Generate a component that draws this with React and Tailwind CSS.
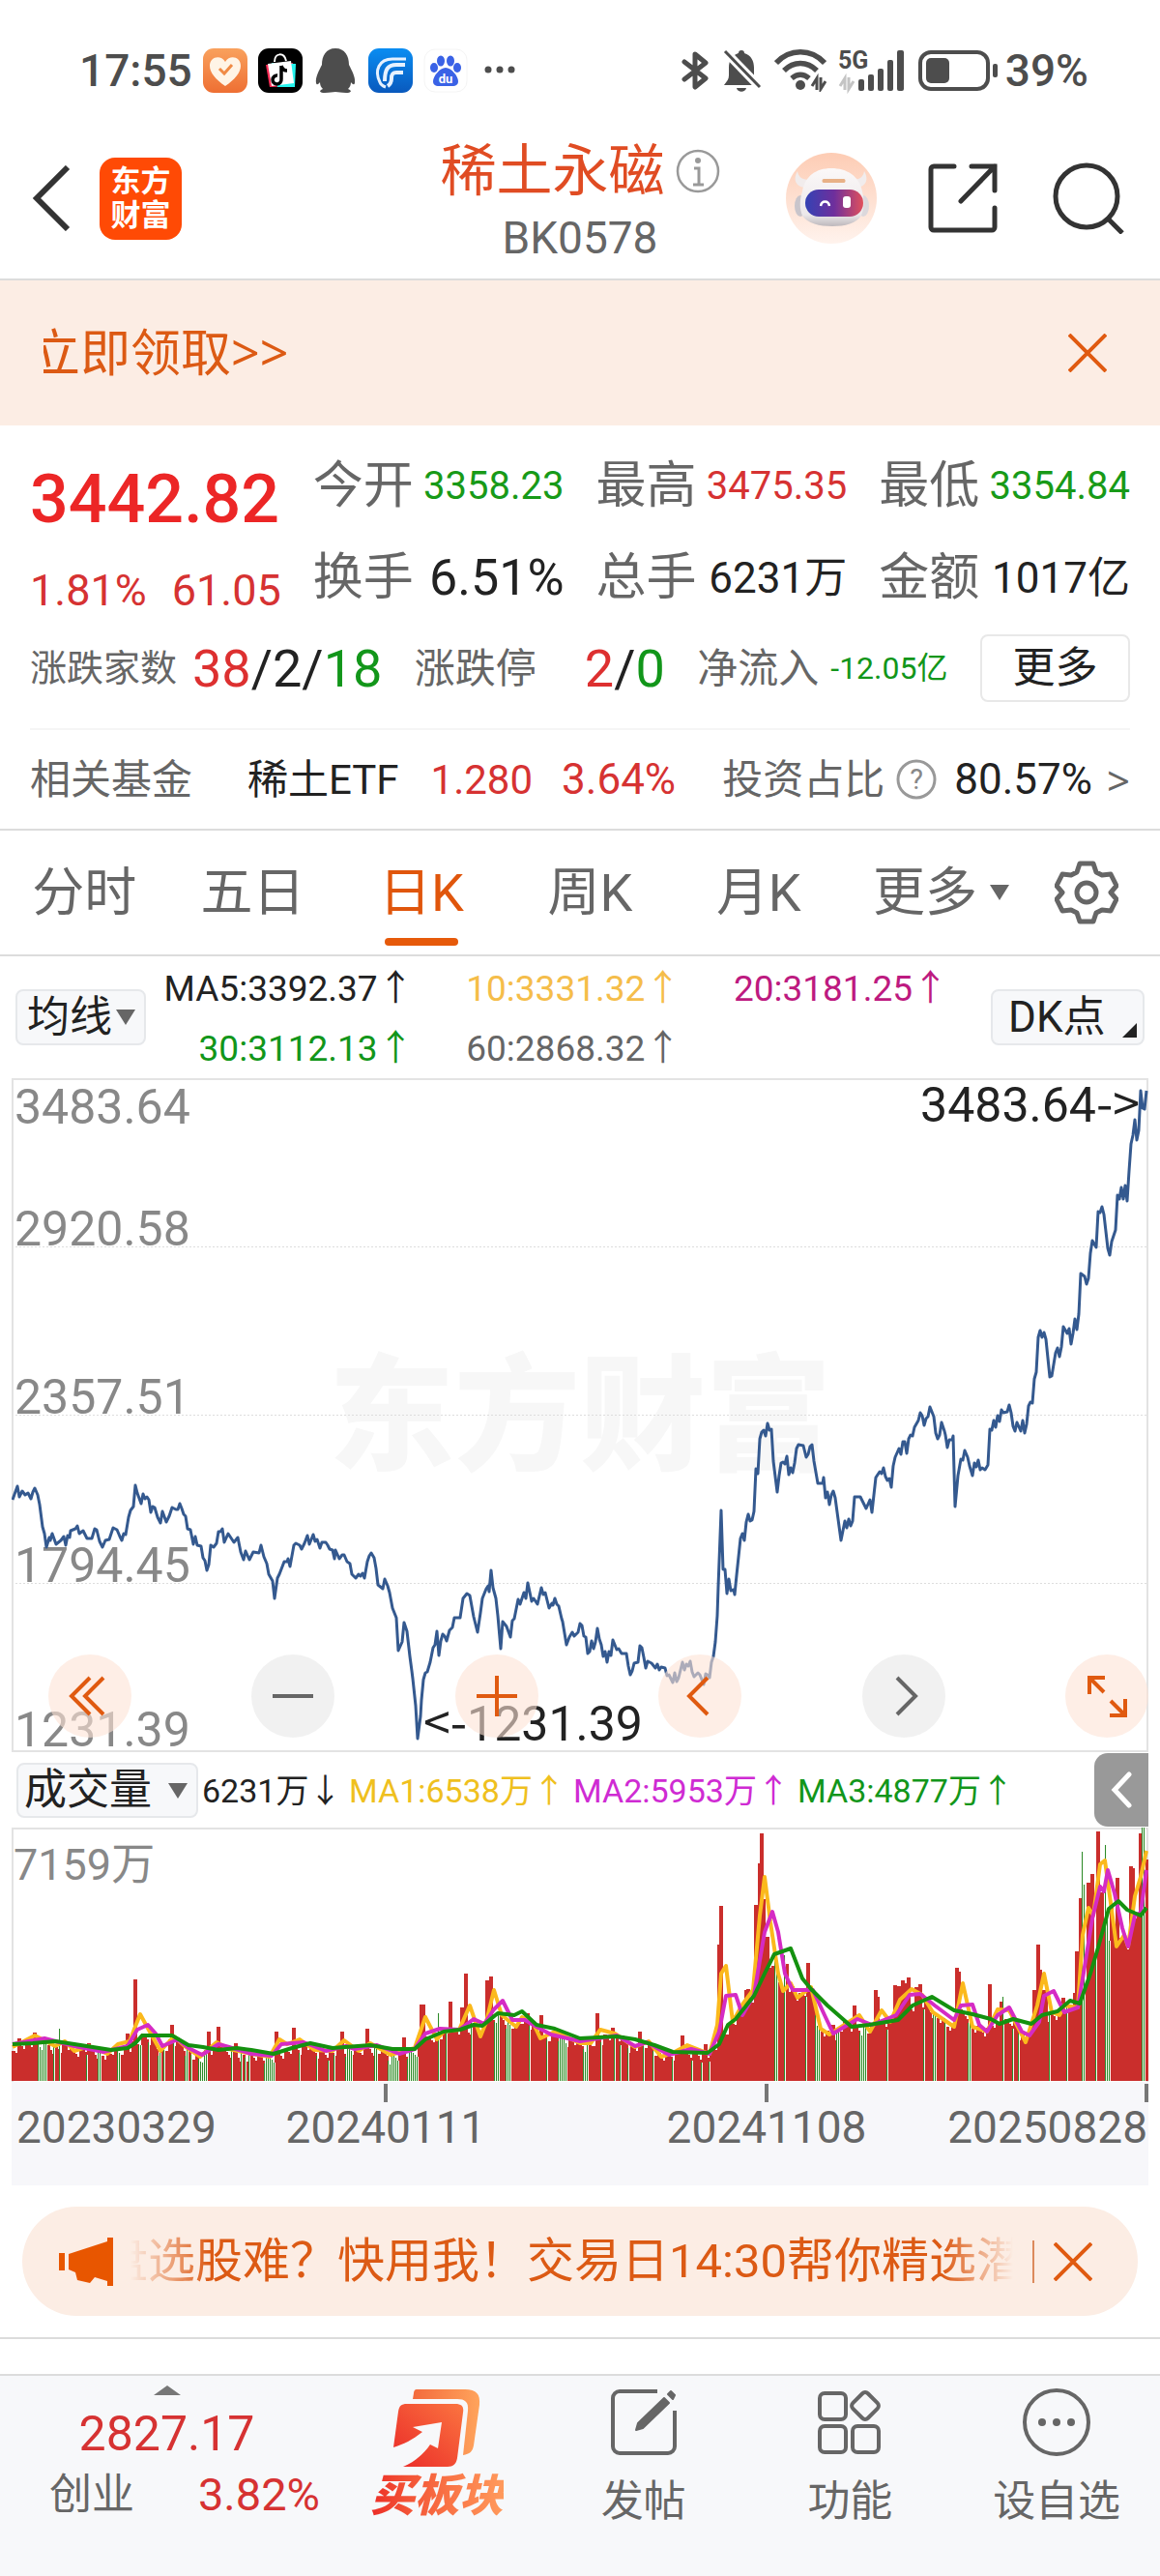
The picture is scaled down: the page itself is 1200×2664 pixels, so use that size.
const QUOTES = [
  [
    { label: '今开', value: '3358.23', cls: 'text-[40px] text-[#189a18]' },
    { label: '换手', value: '6.51%', cls: 'text-[52px] text-[#222]' }
  ],
  [
    { label: '最高', value: '3475.35', cls: 'text-[40px] text-[#d63232]' },
    { label: '总手', value: '6231万', cls: 'text-[44px] text-[#222]' }
  ],
  [
    { label: '最低', value: '3354.84', cls: 'text-[40px] text-[#189a18]' },
    { label: '金额', value: '1017亿', cls: 'text-[44px] text-[#222]' }
  ]
]

const TABS = ['分时', '五日', '日K', '周K', '月K']

const AVERAGES = [
  { text: 'MA5:3392.37', cls: 'text-[#222]' },
  { text: '10:3331.32', cls: 'text-[#f5bd4a]' },
  { text: '20:3181.25', cls: 'text-[#bd1a80]' },
  { text: '30:3112.13', cls: 'text-[#12961a]' },
  { text: '60:2868.32', cls: 'text-[#666]' }
]

const VOLUME_AVERAGES = [
  { text: 'MA1:6538万', cls: 'text-[#efc01e]' },
  { text: 'MA2:5953万', cls: 'text-[#cf2bd3]' },
  { text: 'MA3:4877万', cls: 'text-[#12961a]' }
]

const PRICE_TICKS = [
  { y: 1161, text: '3483.64' },
  { y: 1287, text: '2920.58' },
  { y: 1461, text: '2357.51' },
  { y: 1635, text: '1794.45' },
  { y: 1805, text: '1231.39' }
]

const PRICE_LINE = `13,1550 18,1536 20,1547 23,1541 26,1545 29,1543 32,1549 34,1542 36,1538 39,1545 41,1555 44,1578 46,1585 48,1599 51,1589 52,1592 54,1585 58,1596 63,1592 66,1588 68,1597 70,1587 72,1589 73,1582 78,1580 80,1577 82,1585 86,1582 90,1590 95,1590 98,1580 100,1581 103,1593 106,1599 109,1592 113,1591 117,1579 121,1581 124,1588 126,1592 128,1585 130,1586 133,1568 135,1561 138,1557 140,1535 142,1543 146,1554 148,1544 150,1549 152,1547 154,1550 156,1563 158,1557 160,1558 163,1568 166,1574 168,1562 172,1573 175,1567 178,1558 182,1560 184,1560 186,1554 188,1559 190,1565 192,1567 194,1580 197,1581 200,1596 202,1588 204,1597 208,1598 210,1610 212,1613 214,1623 216,1617 218,1597 221,1599 224,1595 226,1583 228,1583 230,1580 232,1594 236,1585 238,1588 242,1594 246,1589 249,1604 252,1612 254,1603 258,1612 262,1604 268,1605 270,1597 273,1609 276,1616 278,1627 282,1634 284,1652 287,1631 289,1627 294,1614 297,1614 298,1611 300,1619 304,1597 306,1595 310,1597 312,1601 315,1595 318,1587 320,1596 324,1586 326,1593 328,1591 331,1600 333,1594 337,1594 339,1597 341,1601 344,1602 346,1611 347,1602 351,1611 354,1607 356,1607 359,1614 362,1616 364,1627 368,1631 371,1627 373,1629 375,1626 377,1631 380,1614 382,1608 384,1605 387,1610 389,1621 391,1638 396,1642 398,1632 401,1639 403,1646 406,1662 410,1672 412,1706 416,1697 418,1677 421,1686 424,1712 426,1727 427,1735 430,1763 432,1797 435,1774 436,1757 438,1736 440,1729 442,1728 445,1718 448,1703 450,1700 452,1686 454,1711 456,1696 458,1689 460,1691 462,1696 465,1685 468,1682 470,1672 476,1672 479,1652 483,1647 486,1649 490,1671 494,1687 497,1667 499,1652 503,1642 505,1639 506,1645 508,1623 510,1641 513,1652 515,1670 518,1704 520,1676 524,1681 528,1692 530,1675 532,1673 536,1653 538,1658 542,1646 544,1652 546,1636 550,1655 552,1652 556,1658 560,1641 562,1648 564,1646 568,1662 571,1657 572,1659 574,1652 576,1658 578,1660 581,1673 582,1676 586,1700 589,1692 592,1687 594,1691 598,1687 600,1678 602,1680 604,1691 606,1692 608,1709 610,1707 612,1696 614,1704 616,1697 618,1683 620,1694 622,1700 624,1712 626,1707 628,1718 630,1707 632,1711 634,1695 638,1705 640,1704 643,1709 648,1709 650,1722 652,1731 654,1727 656,1719 660,1718 662,1701 664,1703 666,1713 668,1724 670,1717 674,1719 678,1724 680,1720 682,1726 684,1723 688,1724 690,1732 692,1731 696,1739 698,1729 700,1738 702,1734 706,1718 708,1726 710,1720 712,1722 714,1717 716,1728 718,1733 722,1729 724,1731 728,1741 730,1730 732,1731 734,1734 736,1718 738,1712 740,1697 742,1670 743,1640 746,1561 748,1622 750,1622 752,1647 754,1632 756,1644 759,1643 760,1648 762,1628 766,1590 768,1585 770,1592 772,1573 774,1565 776,1572 778,1571 780,1562 782,1518 784,1523 786,1487 788,1480 790,1478 792,1484 794,1471 796,1478 798,1477 800,1510 804,1542 806,1525 808,1512 810,1511 812,1513 814,1505 816,1524 818,1517 820,1522 822,1512 824,1497 826,1493 831,1494 834,1506 836,1503 838,1495 840,1493 842,1510 846,1533 851,1533 852,1527 854,1548 856,1542 858,1555 860,1545 862,1541 864,1548 867,1570 870,1592 874,1572 876,1579 878,1570 880,1577 882,1572 884,1547 890,1547 893,1553 896,1559 900,1550 902,1563 904,1545 906,1527 910,1521 912,1523 914,1517 916,1526 918,1530 920,1528 922,1537 924,1515 926,1506 930,1497 932,1503 934,1490 936,1490 938,1502 940,1487 942,1483 944,1484 946,1475 950,1468 952,1460 954,1463 956,1473 958,1466 960,1464 962,1454 966,1464 968,1481 970,1487 972,1483 974,1470 977,1479 978,1483 980,1496 982,1488 985,1488 986,1484 988,1557 991,1525 994,1508 996,1509 998,1499 1001,1506 1003,1515 1006,1525 1008,1512 1010,1516 1012,1509 1014,1519 1016,1517 1019,1519 1022,1514 1024,1477 1026,1478 1028,1468 1030,1475 1032,1463 1034,1469 1036,1457 1038,1460 1042,1459 1044,1452 1046,1460 1048,1474 1050,1479 1052,1470 1056,1479 1058,1468 1060,1481 1062,1472 1064,1453 1066,1449 1068,1450 1070,1425 1072,1418 1074,1382 1076,1375 1078,1382 1080,1377 1082,1384 1086,1423 1088,1422 1092,1398 1094,1393 1096,1402 1098,1392 1100,1371 1104,1378 1106,1373 1108,1389 1110,1378 1112,1363 1114,1374 1116,1358 1118,1316 1122,1319 1124,1327 1126,1321 1128,1295 1130,1282 1134,1289 1136,1252 1138,1253 1140,1247 1142,1255 1146,1290 1148,1297 1150,1283 1154,1271 1156,1235 1158,1239 1160,1227 1162,1239 1164,1225 1166,1241 1168,1210 1170,1182 1172,1173 1174,1157 1176,1178 1178,1168 1180,1127 1182,1145 1184,1146 1186,1127`

const MA1 = `13,2116 36,2104 57,2115 67,2110 77,2120 92,2115 111,2123 122,2113 134,2110 145,2082 151,2093 166,2120 180,2105 191,2115 207,2126 224,2111 237,2118 260,2123 279,2126 289,2108 297,2113 310,2108 325,2119 344,2120 356,2109 371,2120 383,2112 404,2124 429,2117 440,2085 452,2108 459,2100 475,2098 486,2073 497,2105 503,2090 511,2057 519,2083 534,2095 540,2085 551,2090 559,2107 574,2100 600,2112 611,2112 621,2098 636,2102 657,2116 671,2110 684,2126 696,2122 711,2114 734,2123 742,2093 746,2040 751,2032 758,2090 768,2072 779,2057 786,1980 791,1940 797,1987 805,2040 810,2058 818,2050 825,2065 839,2054 849,2097 858,2103 889,2083 900,2100 912,2078 921,2090 931,2067 943,2056 954,2062 965,2080 987,2095 996,2050 1006,2095 1021,2100 1032,2077 1044,2078 1061,2111 1073,2073 1080,2040 1088,2080 1096,2083 1101,2073 1115,2075 1120,2000 1126,1972 1131,1980 1138,1927 1143,1923 1149,1967 1155,2012 1163,2000 1167,2012 1174,1960 1180,1940 1186,1913`
const MA2 = `13,2113 46,2107 77,2115 107,2121 132,2115 142,2098 153,2093 161,2102 168,2115 184,2108 195,2117 209,2124 226,2113 237,2116 260,2123 281,2125 291,2113 314,2111 337,2120 358,2115 367,2118 390,2114 413,2123 429,2118 440,2102 455,2097 475,2098 490,2087 501,2092 511,2077 520,2068 530,2088 543,2088 555,2095 570,2103 600,2110 638,2104 657,2115 669,2111 692,2124 715,2118 734,2123 744,2100 751,2063 761,2062 768,2083 780,2062 791,1997 799,1976 805,1997 812,2040 820,2057 841,2057 853,2083 862,2102 887,2087 902,2093 927,2083 941,2062 952,2061 967,2073 987,2088 994,2073 1006,2072 1013,2093 1021,2100 1032,2083 1044,2075 1057,2100 1065,2104 1075,2090 1080,2063 1090,2058 1101,2080 1115,2075 1122,2033 1130,1983 1138,1950 1142,1955 1146,1933 1153,1957 1161,1993 1167,2012 1174,1980 1180,1977 1186,1933`
const MA3 = `13,2113 34,2112 57,2110 77,2113 96,2116 115,2119 132,2117 140,2112 147,2104 178,2104 195,2114 210,2116 226,2119 245,2117 260,2119 283,2123 302,2117 321,2112 344,2117 383,2114 406,2118 429,2118 440,2108 459,2100 476,2098 490,2093 499,2094 515,2081 532,2083 540,2079 555,2093 574,2097 600,2107 638,2105 657,2108 677,2114 696,2121 732,2122 744,2113 753,2093 761,2087 780,2063 791,2040 801,2020 818,2014 830,2045 839,2056 856,2073 881,2095 899,2093 929,2088 944,2073 964,2064 987,2078 1006,2082 1025,2087 1034,2092 1048,2087 1067,2092 1078,2083 1094,2079 1107,2068 1117,2071 1128,2040 1136,2013 1147,1973 1157,1965 1166,1974 1180,1980 1186,1972`

// days that stand well above their neighbours: x, top
const PEAKS = [
  [20, 2107], [36, 2101], [62, 2097], [132, 2102], [140, 2046], [178, 2093], [216, 2100], [226, 2095], [244, 2112],
  [286, 2100], [304, 2096], [354, 2100], [380, 2097], [418, 2106], [436, 2072], [438, 2072], [454, 2081], [466, 2069],
  [478, 2075], [482, 2040], [504, 2047], [508, 2043], [546, 2081], [560, 2083], [618, 2081], [634, 2096], [662, 2100],
  [706, 2104], [730, 2113], [744, 2010], [746, 1970], [772, 2057], [774, 2056], [782, 1969], [786, 1926], [788, 1895],
  [790, 1963], [794, 2002], [798, 2037], [812, 2021], [814, 2030], [836, 2029], [862, 2093], [884, 2073], [906, 2057],
  [908, 2064], [926, 2052], [930, 2053], [934, 2047], [936, 2050], [940, 2044], [948, 2054], [952, 2051], [990, 2034],
  [992, 2038], [1024, 2051], [1036, 2069], [1038, 2064], [1070, 2057], [1074, 2010], [1076, 2036], [1080, 2057],
  [1082, 2057], [1100, 2065], [1112, 2060], [1114, 2017], [1118, 1962], [1120, 1914], [1122, 1948], [1126, 1946],
  [1130, 1937], [1136, 1893], [1140, 1956], [1144, 1907], [1148, 2006], [1156, 1941], [1170, 1929], [1172, 1931],
  [1180, 1895], [1182, 1889], [1184, 1889], [1186, 1922]
]

// stretches of falling days
const FALLS = [
  [40, 48], [56, 56], [62, 62], [90, 90], [102, 105], [122, 125], [144, 146], [154, 154], [163, 166], [170, 170],
  [180, 180], [191, 194], [198, 198], [206, 214], [240, 240], [250, 250], [254, 254], [258, 258], [274, 284],
  [310, 310], [328, 328], [340, 340], [346, 346], [358, 364], [388, 391], [402, 412], [422, 432], [454, 454],
  [462, 462], [488, 488], [512, 517], [524, 528], [548, 548], [566, 566], [578, 586], [603, 608], [622, 622],
  [636, 636], [642, 642], [650, 650], [666, 666], [676, 676], [696, 696], [716, 716], [726, 726], [734, 734],
  [802, 804], [812, 812], [834, 834], [844, 849], [866, 869], [890, 896], [918, 918], [956, 956], [966, 969],
  [978, 978], [1002, 1005], [1038, 1038], [1048, 1048], [1054, 1054], [1085, 1087], [1104, 1104], [1120, 1122],
  [1134, 1134], [1144, 1148], [1182, 1184]
]

const toPoints = (s) => s.split(' ').map(p => p.split(',').map(Number))

function yAt(points, x) {
  for (let i = 1; i < points.length; i++) {
    const [x0, y0] = points[i - 1]
    const [x1, y1] = points[i]
    if (x <= x1) return y0 + ((y1 - y0) * (x - x0)) / (x1 - x0)
  }
  return points[points.length - 1][1]
}

function buildBars() {
  const base1 = toPoints(MA1)
  const base3 = toPoints(MA3)
  const peaks = new Map(PEAKS)
  const bars = []
  for (let x = 14; x <= 1186; x += 2) {
    const down = FALLS.some(([a, b]) => x >= a && x <= b)
    const noise = ((x * 37) % 23) / 23
    const level = Math.max(yAt(base1, x), yAt(base3, x))
    const top = peaks.get(x) ?? Math.round(level + noise * 14 - 3)
    bars.push({ x, top, down })
  }
  return bars
}

const BARS = buildBars()
const RISE_PATH = BARS.filter(b => !b.down).map(b => `M${b.x - 2} 2151V${b.top}h4V2151z`).join('')
const FALL_BARS = BARS.filter(b => b.down)
const FALL_GAPS = FALL_BARS.map(b => `M${b.x} 2151V${b.top}`).join('')
const FALL_PATH = FALL_BARS.map(b => `M${b.x - 0.5} 2151V${b.top}`).join('')

function Arrow({ down }) {
  return <span className="[font-family:'Noto_Sans_CJK_SC',sans-serif]">{down ? '↓' : '↑'}</span>
}

function CloseIcon() {
  return (
    <svg viewBox="0 0 40 40" className="size-10" fill="none" stroke="#e05a10" strokeWidth="4">
      <path d="M1 1 39 39M39 1 1 39" />
    </svg>
  )
}

function StatusBar() {
  return (
    <div className="h-[146px] pl-[82px] pr-[74px] flex items-center justify-between text-[46px] font-medium text-[#4d4d4d]">
      <div className="flex items-center gap-[11px]">
        <span>17:55</span>
        <svg viewBox="0 0 46 46" className="size-[46px]">
          <defs>
            <linearGradient id="heartBg" x1="0" y1="0" x2="0" y2="1">
              <stop offset="0" stopColor="#f9a15d" /><stop offset="1" stopColor="#ee6f33" />
            </linearGradient>
          </defs>
          <rect width="46" height="46" rx="11" fill="url(#heartBg)" />
          <path d="M23 39C13 32 7 25 7 18c0-9 11-12 16-4 5-8 16-5 16 4 0 7-6 14-16 21z" fill="#fff4e6" />
          <path d="m17 21 5 5 8-9" fill="none" stroke="#f08a45" strokeWidth="3" />
        </svg>
        <svg viewBox="0 0 46 46" className="size-[46px]">
          <rect width="46" height="46" rx="11" fill="#000" />
          <path d="M17 14c0-10 10-10 12-1" fill="none" stroke="#fff" strokeWidth="2" />
          <path d="m8 17 4 23 26-1-2-24z" fill="#fe2c55" />
          <path d="m14 15 25 1-1 24-18 0z" fill="#25f4ee" />
          <path d="m10 16 24-3 3 23-23 3z" fill="#fff" />
          <path d="M24 18v14a4.500 4.500 0 1 1-4-4M24 18c1 4 3 5 6 5" fill="none" stroke="#000" strokeWidth="3.500" />
        </svg>
        <svg viewBox="0 0 46 46" className="size-[46px]" fill="#4d4d4d">
          <path d="M23 0c10 0 14 8 14 17 3 6 7 13 6 19-1 3-3 0-4-1 0 3-1 5-3 7 5 2 3 4-2 4-5 0-8-1-11-1s-6 1-11 1c-5 0-7-2-2-4-2-2-3-4-3-7-1 1-3 4-4 1-1-6 3-13 6-19C9 8 13 0 23 0z" />
        </svg>
        <svg viewBox="0 0 46 46" className="size-[46px]">
          <defs>
            <linearGradient id="blueBg" x1="0" y1="0" x2="0" y2="1">
              <stop offset="0" stopColor="#0a8df2" /><stop offset="1" stopColor="#0959bd" />
            </linearGradient>
          </defs>
          <rect width="46" height="46" rx="11" fill="url(#blueBg)" />
          <g fill="none" stroke="#e6f1ff" strokeWidth="4">
            <path d="M39 11H25C11 11 6 23 12 35c1 3 3 4 6 5" strokeWidth="3" />
            <path d="M38 17H29C20 17 17 22 17 34" />
            <path d="M36 25H29c-4 0-5 2-5 6 0 3-1 6-4 8" />
          </g>
        </svg>
        <svg viewBox="0 0 46 46" className="size-[46px]" fill="#3a62e6">
          <rect x="1" y="1" width="44" height="44" rx="11" fill="#fff" stroke="#f4f4f4" />
          <ellipse cx="18" cy="13" rx="4" ry="5.500" />
          <ellipse cx="28" cy="13" rx="4" ry="5.500" />
          <ellipse cx="11" cy="20" rx="4" ry="5" />
          <ellipse cx="35" cy="20" rx="4" ry="5" />
          <path d="M23 20c6 0 13 9 13 14 0 6-6 5-13 5s-13 1-13-5c0-5 7-14 13-14z" />
          <text x="23" y="36" textAnchor="middle" fontSize="13" fontWeight="700" fill="#fff">du</text>
        </svg>
        <svg viewBox="0 0 46 46" className="size-[46px]" fill="#4d4d4d">
          <circle cx="10" cy="22" r="3.500" /><circle cx="22" cy="22" r="3.500" /><circle cx="34" cy="22" r="3.500" />
        </svg>
      </div>

      <div className="flex items-center gap-3">
        <svg viewBox="0 0 30 42" className="w-[30px] h-[42px]" fill="none" stroke="#4d4d4d" strokeWidth="5" strokeLinejoin="round" strokeLinecap="round">
          <path d="m3 12 22 17-11 9V4l11 9L3 30" />
        </svg>
        <svg viewBox="0 0 42 44" className="w-[42px] h-11" fill="#4d4d4d">
          <path d="M20 1c2 0 3 1 3 3 7 2 10 8 10 15v11l4 7H2c3-4 5-6 5-10V19c0-7 3-13 10-15 0-2 1-3 3-3z" />
          <path d="M15 40h10c-1 5-9 5-10 0z" />
          <path d="m3 2 36 37" stroke="#fff" strokeWidth="9" />
          <path d="m3 2 36 37" stroke="#4d4d4d" strokeWidth="3" />
        </svg>
        <svg viewBox="0 0 54 44" className="w-[54px] h-11" fill="none" stroke="#4d4d4d" strokeWidth="5.500">
          <path d="M2 14C16-1 38-1 52 14" />
          <path d="M10 22c10-10 24-10 34 0" />
          <path d="M18 30c6-5 12-5 18 0" />
          <circle cx="27" cy="37" r="5" fill="#4d4d4d" stroke="none" />
          <path d="M44 42V30l-5 8M48 29v12l5-8" strokeWidth="3" />
        </svg>
        <svg viewBox="0 0 70 44" className="w-[70px] h-11 overflow-visible" fill="#4d4d4d">
          <text x="0" y="20" fontSize="25" fontWeight="700">5G</text>
          <path d="M7 42V30l-5 8M11 29v12l5-8" fill="none" stroke="#c4c4c4" strokeWidth="3" />
          <rect x="21" y="31" width="6" height="12" rx="2" />
          <rect x="31" y="26" width="6" height="17" rx="2" />
          <rect x="41" y="20" width="6" height="23" rx="2" />
          <rect x="51" y="11" width="6" height="32" rx="2" />
          <rect x="61" y="1" width="7" height="42" rx="2" />
        </svg>
        <div className="flex items-center gap-[7px]">
          <svg viewBox="0 0 84 44" className="w-[84px] h-11" fill="#4d4d4d">
            <rect x="3" y="3" width="70" height="38" rx="11" fill="none" stroke="#4d4d4d" strokeWidth="4" />
            <rect x="9" y="9" width="24" height="26" rx="5" />
            <rect x="78" y="15" width="5" height="14" rx="2" />
          </svg>
          <span>39%</span>
        </div>
      </div>
    </div>
  )
}

function Header() {
  return (
    <header className="h-[144px] border-b-2 border-[#dcdcdc] grid grid-cols-[1fr_auto_1fr] items-center">
      <div className="flex items-center gap-[30px] pl-[33px] mb-6">
        <button aria-label="返回">
          <svg viewBox="0 0 40 68" className="w-10 h-[68px]" fill="none" stroke="#333" strokeWidth="6">
            <path d="M37 2 5 34l32 32" />
          </svg>
        </button>
        <div className="size-[85px] rounded-2xl bg-[#ff4a05] text-white font-bold text-[31px] leading-[35px] flex flex-col items-center justify-center">
          <span>东方</span>
          <span>财富</span>
        </div>
      </div>

      <div className="self-start text-center">
        <div className="flex items-center gap-[11px]">
          <h1 className="text-[58px] leading-[62px] text-[#e04c23]">稀土永磁</h1>
          <svg viewBox="0 0 46 46" className="size-[46px]" fill="none" stroke="#999" strokeWidth="2.500">
            <circle cx="23" cy="23" r="21" />
            <circle cx="23" cy="12" r="3" fill="#999" stroke="none" />
            <path d="M19 20h5v17M18 37h11" strokeWidth="3" />
          </svg>
        </div>
        <p className="text-[46px] leading-[76px] text-[#666]">BK0578</p>
      </div>

      <div className="flex items-center justify-end pr-[37px] mb-6">
        <button aria-label="助手" className="mr-[53px]">
          <svg viewBox="0 0 94 94" className="size-[94px]">
            <defs>
              <linearGradient id="botBg" x1="0" y1="0" x2="0" y2="1">
                <stop offset="0" stopColor="#fdccb4" /><stop offset="1" stopColor="#fff3ed" />
              </linearGradient>
              <linearGradient id="botHead" x1="0" y1="0" x2="0" y2="1">
                <stop offset="0" stopColor="#fbf8f8" /><stop offset=".8" stopColor="#ece8ea" /><stop offset="1" stopColor="#bdb8bc" />
              </linearGradient>
              <linearGradient id="botFace">
                <stop offset="0" stopColor="#3442b4" /><stop offset=".5" stopColor="#6f2f9c" /><stop offset="1" stopColor="#e0505c" />
              </linearGradient>
            </defs>
            <circle cx="47" cy="47" r="47" fill="url(#botBg)" />
            <path d="M19 36c-9-1-12-9-7-17 1 7 6 9 13 9zM74 36c9-1 12-9 7-17-1 7-6 9-13 9z" fill="#f1ecec" />
            <ellipse cx="15" cy="55" rx="6" ry="11" fill="#c9c5cb" />
            <ellipse cx="80" cy="55" rx="6" ry="11" fill="#dcd8dc" />
            <path d="M47 16c16 0 29 8 32 24 2 9 2 18-1 25-5 8-17 11-30 11s-26-3-31-11c-3-7-3-16 0-25 3-16 14-24 30-24z" fill="url(#botHead)" />
            <path d="M39 27h21c2 0 2 4 0 4H39c-2 0-2-4 0-4z" fill="#e8b187" />
            <rect x="20" y="38" width="60" height="28" rx="14" fill="url(#botFace)" />
            <path d="M36 55c1-6 8-6 9 0" fill="none" stroke="#fff" strokeWidth="2.500" />
            <rect x="59" y="45" width="8" height="12" rx="3" fill="#fff" />
          </svg>
        </button>
        <button aria-label="分享" className="mr-[57px]">
          <svg viewBox="0 0 72 72" className="size-[72px]" fill="none" stroke="#333" strokeWidth="5" strokeLinecap="round">
            <path d="M27 3H6a3 3 0 0 0-3 3v60a3 3 0 0 0 3 3h60a3 3 0 0 0 3-3V46" />
            <path d="M45 3h24v25M69 3 34 39" />
          </svg>
        </button>
        <button aria-label="搜索">
          <svg viewBox="0 0 74 74" className="size-[74px]" fill="none" stroke="#333" strokeWidth="5">
            <circle cx="35" cy="35" r="32" />
            <path d="m57 58 15 15" />
          </svg>
        </button>
      </div>
    </header>
  )
}

function Quote() {
  return (
    <section className="border-b-2 border-[#dcdcdc]">
      <div className="px-[31px] pt-[15px] grid grid-cols-4 gap-x-[33px]">
        <div className="pt-[14px]">
          <p className="text-[70px] leading-[95px] font-medium text-[#ec2626]">3442.82</p>
          <p className="mt-[14px] text-[45px] leading-[66px] text-[#d63232] flex justify-between">
            <span>1.81%</span>
            <span>61.05</span>
          </p>
        </div>
        {QUOTES.map(col => (
          <dl key={col[0].label}>
            {col.map(item => (
              <div key={item.label} className="h-[95px] flex items-center justify-between whitespace-nowrap">
                <dt className="text-[52px] text-[#666]">{item.label}</dt>
                <dd className={item.cls}>{item.value}</dd>
              </div>
            ))}
          </dl>
        ))}
      </div>

      <div className="px-[31px]">
        <div className="h-[92px] flex items-center justify-between text-[42px] text-[#666] whitespace-nowrap">
          <div className="flex items-center gap-4">
            <span className="text-[38px]">涨跌家数</span>
            <span className="text-[54px] text-[#222]">
              <span className="text-[#dd3030]">38</span>/2/<span className="text-[#12961a]">18</span>
            </span>
          </div>
          <div className="flex items-center gap-[50px]">
            <span>涨跌停</span>
            <span className="text-[54px] text-[#222]">
              <span className="text-[#dd3030]">2</span>/<span className="text-[#12961a]">0</span>
            </span>
          </div>
          <div className="flex items-center gap-3">
            <span>净流入</span>
            <span className="text-[32px] text-[#12961a]">-12.05亿</span>
          </div>
          <button className="w-[155px] h-[70px] border-2 border-[#e8e8e8] rounded-lg text-[44px] leading-[64px] text-[#222]">更多</button>
        </div>
        <a href="#fund" className="mt-4 h-[104px] border-t-2 border-[#f5f5f5] flex items-center text-[42px] text-[#666] whitespace-nowrap">
          <span className="mr-[57px]">相关基金</span>
          <span className="mr-[33px] text-[#222]">稀土ETF</span>
          <span className="mr-[30px] text-[#d63232]">1.280</span>
          <span className="text-[44px] text-[#d63232]">3.64%</span>
          <span className="ml-auto">投资占比</span>
          <svg viewBox="0 0 42 42" className="size-[42px] ml-3 mr-[18px]">
            <circle cx="21" cy="21" r="19" fill="none" stroke="#999" strokeWidth="3" />
            <text x="21" y="31" textAnchor="middle" fontSize="29" fill="#888">?</text>
          </svg>
          <span className="text-[44px] text-[#222]">80.57%</span>
          <span className="ml-[15px] [font-family:'Noto_Sans',sans-serif]">&gt;</span>
        </a>
      </div>
    </section>
  )
}

function PeriodTabs() {
  return (
    <nav className="h-[130px] border-b-2 border-[#dcdcdc] flex text-[54px] text-[#666]">
      {TABS.map(tab => (
        <button key={tab} className={`relative flex-1 ${tab === '日K' ? 'text-[#e0560c]' : ''}`}>
          {tab}
          {tab === '日K' && (
            <span className="absolute bottom-[9px] left-1/2 -translate-x-1/2 w-[76px] h-2 rounded-full bg-[#e65a0a]" />
          )}
        </button>
      ))}
      <div className="w-[328px] pl-[31px] pr-[43px] flex items-center justify-between">
        <button className="flex items-center gap-[13px]">
          更多
          <svg viewBox="0 0 20 16" className="w-5 h-4" fill="#666"><path d="M0 0h20L10 16z" /></svg>
        </button>
        <button aria-label="设置">
          <svg viewBox="0 0 66 66" className="size-[66px]" fill="none" stroke="#666" strokeWidth="5" strokeLinejoin="round">
            <path d="M26 3h14l3 9 6 3 9-1 6 12-6 7 6 7-6 12-9-1-6 3-3 9H26l-3-9-6-3-9 1L2 40l6-7-6-7L8 14l9 1 6-3z" />
            <circle cx="33" cy="33" r="10" />
          </svg>
        </button>
      </div>
    </nav>
  )
}

function Averages() {
  return (
    <div className="h-[126px] px-4 flex items-center">
      <div className="relative">
        <select aria-label="指标" className="block appearance-none w-[135px] h-[58px] pl-[10px] rounded-lg border-2 border-[#e6e8eb] bg-[#f7f8fa] text-[44px] leading-[54px] text-[#222]">
          <option>均线</option>
        </select>
        <svg viewBox="0 0 20 16" className="absolute right-[11px] top-[21px] w-5 h-4 pointer-events-none" fill="#666"><path d="M0 0h20L10 16z" /></svg>
      </div>
      <div className="flex-1 mr-11 grid grid-cols-3 text-right text-[37px] leading-[59px] whitespace-nowrap">
        {AVERAGES.map(a => (
          <span key={a.text} className={a.cls}>{a.text}<Arrow /></span>
        ))}
      </div>
      <button className="relative w-[159px] h-[58px] pl-4 text-left rounded-lg border-2 border-[#e6e8eb] bg-[#f7f8fa] text-[44px] leading-[54px] text-[#222]">
        DK点
        <svg viewBox="0 0 15 15" className="absolute right-[6px] bottom-[6px] size-[15px]" fill="#222"><path d="M15 0v15H0z" /></svg>
      </button>
    </div>
  )
}

function ChartButton({ label, gray, d }) {
  return (
    <button aria-label={label} className={`size-[86px] rounded-full ${gray ? 'bg-[#e8e8e8]/60' : 'bg-[#fde3d6]/60'}`}>
      <svg viewBox="0 0 86 86" className="size-[86px]" fill="none" stroke={gray ? '#666' : '#e05a10'} strokeWidth="4">
        <path d={d} />
      </svg>
    </button>
  )
}

function PriceChart() {
  return (
    <div className="relative mx-3">
      <svg viewBox="12 1114 1176 697" className="block w-full h-auto">
        <text x="340" y="1509" fontSize="130" fontWeight="900" fill="#f7f7f7">东方财富</text>
        <g stroke="#ddd" strokeDasharray="2 2">
          <path d="M12 1288.500H1187M12 1462.500H1187M12 1636.500H1187" />
        </g>
        <rect x="13" y="1115" width="1174" height="695" fill="none" stroke="#e3e3e3" strokeWidth="2" />
        <g fontSize="50" fill="#888">
          {PRICE_TICKS.map(t => <text key={t.text} x="15" y={t.y}>{t.text}</text>)}
        </g>
        <polyline points={PRICE_LINE} fill="none" stroke="#34598f" strokeWidth="3" strokeLinejoin="round" />
        <g fontSize="50" fill="#222">
          <text x="1179" y="1159" textAnchor="end">3483.64<tspan fontFamily="'Noto Sans CJK SC'">-&gt;</tspan></text>
          <text x="438" y="1799"><tspan fontFamily="'Noto Sans CJK SC'">&lt;-</tspan>1231.39</text>
        </g>
      </svg>
      <div className="absolute bottom-[15px] left-[38px] right-0 flex justify-between">
        <ChartButton label="最左" d="M43 24 24 43l19 19M57 24 38 43l19 19" />
        <ChartButton label="缩小" gray d="M22 43h42" />
        <ChartButton label="放大" d="M22 43h42M43 22v42" />
        <ChartButton label="左移" d="M51 24 32 43l19 19" />
        <ChartButton label="右移" gray d="m36 24 19 19-19 19" />
        <ChartButton label="全屏" d="M25 41V24h16M25 24l15 15M62 46v17H46M62 63 47 48" />
      </div>
    </div>
  )
}

function VolumeHeader() {
  return (
    <div className="h-[78px] ml-[17px] mr-3 flex items-center text-[34px] whitespace-nowrap">
      <div className="relative mr-1">
        <select aria-label="副图" className="block appearance-none w-[188px] h-[57px] pl-1.5 rounded-lg border-2 border-[#e6e8eb] bg-[#f7f8fa] text-[44px] leading-[53px] text-[#222]">
          <option>成交量</option>
        </select>
        <svg viewBox="0 0 20 16" className="absolute right-[11px] top-[21px] w-5 h-4 pointer-events-none" fill="#666"><path d="M0 0h20L10 16z" /></svg>
      </div>
      <span className="w-[152px] text-[#222]">6231万<Arrow down /></span>
      {VOLUME_AVERAGES.map(v => (
        <span key={v.text} className={`w-[232px] ${v.cls}`}>{v.text}<Arrow /></span>
      ))}
      <button aria-label="展开" className="ml-auto w-14 h-[76px] rounded-l-[14px] bg-[#999] flex items-center justify-center">
        <svg viewBox="0 0 22 38" className="w-[22px] h-[38px]" fill="none" stroke="#fff" strokeWidth="5" strokeLinecap="round">
          <path d="M19 3 4 19l15 16" />
        </svg>
      </button>
    </div>
  )
}

function VolumeChart() {
  return (
    <div className="mx-3">
      <svg viewBox="12 1889 1176 370" className="block w-full h-auto">
        <rect x="12" y="2152" width="1176" height="107" fill="#f7f7fa" />
        <path d="M13 2152V1890H1187V2152" fill="none" stroke="#e3e3e3" strokeWidth="2" />
        <text x="14" y="1943" fontSize="45" fill="#888">7159万</text>
        <path d={RISE_PATH} fill="#ca2e2c" />
        <path d={FALL_GAPS} stroke="#f4faec" strokeWidth="2" />
        <path d={FALL_PATH} stroke="#2c8a2a" strokeWidth="1" />
        <g fill="none" strokeWidth="4" strokeLinejoin="round">
          <polyline points={MA1} stroke="#fbb91c" />
          <polyline points={MA2} stroke="#d52bc4" />
          <polyline points={MA3} stroke="#14910f" />
        </g>
        <path d="M399 2154v19M793 2154v19M1186 2154v19" stroke="#777" strokeWidth="4" />
        <g fontSize="46" fill="#666">
          <text x="17" y="2215">20230329</text>
          <text x="399" y="2215" textAnchor="middle">20240111</text>
          <text x="793" y="2215" textAnchor="middle">20241108</text>
          <text x="1187" y="2215" textAnchor="end">20250828</text>
        </g>
      </svg>
    </div>
  )
}

function Promo() {
  return (
    <div className="mt-[22px] mb-[22px] mx-[23px] h-[113px] rounded-full bg-[#fcede4] pl-[38px] pr-[47px] flex items-center text-[49px] text-[#dc5a14]">
      <svg viewBox="0 0 56 50" className="w-14 h-[50px] shrink-0" fill="#e85600">
        <path d="M0 16h6v18H0zM10 17 50 4V0h6v50h-6v-5l-13-4-5 6-13-3-2-8-7-3z" />
      </svg>
      <div className="ml-[18px] flex-1 overflow-hidden whitespace-nowrap [mask-image:linear-gradient(to_right,transparent,black_9%,black_92%,transparent)]">
        <span className="-ml-[31px]">盘选股难？快用我！交易日14:30帮你精选潜力股</span>
      </div>
      <span className="ml-[20px] mr-[20px] w-0.5 h-11 bg-[#dc8a5c]" />
      <button aria-label="关闭"><CloseIcon /></button>
    </div>
  )
}

function BottomBar() {
  return (
    <footer className="h-[210px] border-t-2 border-[#dcdcdc] bg-[#f7f8fa] flex text-[44px] text-[#666]">
      <button className="w-[345px] pt-[10px] flex flex-col items-center">
        <svg viewBox="0 0 28 10" className="w-7 h-[10px]" fill="#777"><path d="M14 0 28 10H0z" /></svg>
        <span className="text-[50px] leading-[80px] text-[#d63232]">2827.17</span>
        <span className="w-full pl-[51px] pr-[14px] flex items-center justify-between leading-[46px]">
          创业
          <span className="text-[47px] text-[#d63232]">3.82%</span>
        </span>
      </button>
      <button className="flex-1 pt-[14px] flex flex-col items-center">
        <svg viewBox="0 0 90 80" className="w-[90px] h-20">
          <defs>
            <linearGradient id="buyFront" x1="1" y1="0" x2="0" y2="1">
              <stop offset="0" stopColor="#fb7440" /><stop offset="1" stopColor="#ea2a28" />
            </linearGradient>
            <linearGradient id="buyBack" x1="1" y1="0" x2="0" y2="0">
              <stop offset="0" stopColor="#ffa45c" /><stop offset="1" stopColor="#f36a3c" />
            </linearGradient>
          </defs>
          <path d="M24 0h50c12 0 16 5 15 16l-6 42c-1 6-4 9-11 10l5-46c1-9-3-12-11-12H20l1-6c0-2 1-4 3-4z" fill="url(#buyBack)" />
          <path d="M14 15h50c7 0 9 3 8 9l-6 47c-1 6-4 9-10 9H10c12-5 22-14 28-23l8 4 4-27-30 5 10 5C20 52 10 57 0 60l5-37c1-6 3-8 9-8z" fill="url(#buyFront)" />
        </svg>
        <span className="text-[46px] leading-[60px] font-black italic bg-gradient-to-r from-[#ec2a26] to-[#ff9a5c] bg-clip-text text-transparent">买板块</span>
      </button>
      <button className="flex-1 pt-[14px] flex flex-col items-center">
        <svg viewBox="0 0 68 68" className="size-[68px]" fill="none" stroke="#666" strokeWidth="4">
          <path d="M48 2H9a7 7 0 0 0-7 7v50a7 7 0 0 0 7 7h50a7 7 0 0 0 7-7V22" />
          <path d="m26 42 2-7 27-26 5 5-27 26zM59 5l3-3 4 4-2 4z" fill="#666" strokeWidth="2" strokeLinejoin="round" />
        </svg>
        <span className="mt-[18px] leading-[60px]">发帖</span>
      </button>
      <button className="flex-1 pt-[14px] flex flex-col items-center">
        <svg viewBox="0 0 68 68" className="size-[68px]" fill="none" stroke="#666" strokeWidth="4">
          <rect x="3" y="4" width="27" height="27" rx="5" />
          <rect x="3" y="38" width="27" height="27" rx="5" />
          <rect x="37" y="38" width="27" height="27" rx="5" />
          <rect x="39" y="6" width="22" height="22" rx="4" transform="rotate(45 50 17)" />
        </svg>
        <span className="mt-[18px] leading-[60px]">功能</span>
      </button>
      <button className="flex-1 pt-[14px] flex flex-col items-center">
        <svg viewBox="0 0 68 68" className="size-[68px] overflow-visible" fill="none" stroke="#666" strokeWidth="4">
          <circle cx="34" cy="34" r="33" />
          <g fill="#666" stroke="none">
            <circle cx="19" cy="34" r="4" /><circle cx="34" cy="34" r="4" /><circle cx="49" cy="34" r="4" />
          </g>
        </svg>
        <span className="mt-[18px] leading-[60px]">设自选</span>
      </button>
    </footer>
  )
}

export default function App() {
  return (
    <div className="bg-white [font-family:Roboto,'Noto_Sans_CJK_SC',sans-serif]">
      <StatusBar />
      <Header />

      {/* Scrolling notice */}
      <div className="h-[150px] bg-[#fcede4] pl-[45px] pr-[55px] flex items-center justify-between text-[52px] text-[#dc5a14]">
        <a href="#claim" className="overflow-hidden whitespace-nowrap">
          <span className="-ml-[14px]">立即领取<span className="[font-family:'Noto_Sans',sans-serif]">&gt;&gt;</span></span>
        </a>
        <button aria-label="关闭通知"><CloseIcon /></button>
      </div>

      <Quote />
      <PeriodTabs />
      <Averages />
      <PriceChart />
      <VolumeHeader />
      <VolumeChart />
      <Promo />
      <div className="h-[38px] border-t-2 border-[#dcdcdc]" />
      <BottomBar />
    </div>
  )
}
